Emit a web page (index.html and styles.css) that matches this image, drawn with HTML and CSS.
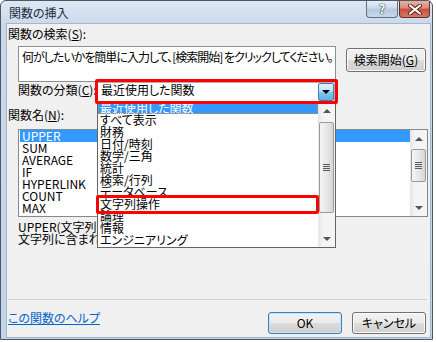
FILE: index.html
```html
<!DOCTYPE html>
<html lang="ja">
<head>
    <meta charset="UTF-8">
    <meta name="viewport" content="width=device-width, initial-scale=1.0">
    <title>関数の挿入</title>
    <link rel="stylesheet" href="styles.css">
</head>
<body>
    <div class="window">
        <div class="titlebar">
            <span class="title">関数の挿入</span>
            <div class="caption-btns">
                <span class="cap help">?</span>
                <span class="cap close">
                    <svg width="14" height="11" viewBox="0 0 14 11">
                        <path d="M2 1.5 L12 9.5 M12 1.5 L2 9.5" stroke="#5a1f18" stroke-width="4" stroke-linecap="round"/>
                        <path d="M2 1.5 L12 9.5 M12 1.5 L2 9.5" stroke="#fff" stroke-width="2.2" stroke-linecap="round"/>
                    </svg>
                </span>
            </div>
        </div>

        <div class="client">
            <div class="label label-top">関数の検索(<u>S</u>):</div>

            <div class="search-row">
                <div class="search-box">何がしたいかを簡単に入力して、[検索開始] をクリックしてください。</div>
                <button class="btn btn-search">検索開始(<u>G</u>)</button>
            </div>

            <div class="cat-row">
                <span class="cat-label">関数の分類(<u>C</u>):</span>
                <div class="combo">
                    <span class="combo-text">最近使用した関数</span>
                    <span class="combo-arrow"><i class="tri-down"></i></span>
                </div>
            </div>

            <div class="label label-fn">関数名(<u>N</u>):</div>

            <div class="fn-list">
                <div class="fn-items">
                    <div class="row selected">UPPER</div>
                    <div class="row">SUM</div>
                    <div class="row">AVERAGE</div>
                    <div class="row">IF</div>
                    <div class="row">HYPERLINK</div>
                    <div class="row">COUNT</div>
                    <div class="row">MAX</div>
                </div>
                <div class="sb">
                    <div class="sb-btn"><i class="tri-up"></i></div>
                    <div class="sb-track">
                        <div class="sb-thumb fn-thumb"><i class="grip"></i></div>
                    </div>
                    <div class="sb-btn"><i class="tri-down small"></i></div>
                </div>
            </div>

            <div class="desc">
                <div>UPPER(文字列)</div>
                <div>文字列に含まれる英字をすべて大文字に変換します。</div>
            </div>

            <div class="sep"></div>

            <div class="footer">
                <a class="help-link" href="#">この関数のヘルプ</a>
                <button class="btn btn-ok">OK</button>
                <button class="btn btn-cancel">キャンセル</button>
            </div>

            <!-- 開いた分類リスト -->
            <div class="dropdown">
                <div class="dd-items">
                    <div class="row selected focus">最近使用した関数</div>
                    <div class="row">すべて表示</div>
                    <div class="row">財務</div>
                    <div class="row">日付/時刻</div>
                    <div class="row">数学/三角</div>
                    <div class="row">統計</div>
                    <div class="row">検索/行列</div>
                    <div class="row">データベース</div>
                    <div class="row">文字列操作</div>
                    <div class="row">論理</div>
                    <div class="row">情報</div>
                    <div class="row">エンジニアリング</div>
                </div>
                <div class="sb">
                    <div class="sb-btn"><i class="tri-up"></i></div>
                    <div class="sb-track">
                        <div class="sb-thumb dd-thumb"><i class="grip"></i></div>
                    </div>
                    <div class="sb-btn"><i class="tri-down small"></i></div>
                </div>
            </div>

            <!-- 赤枠 -->
            <div class="mark mark-combo"></div>
            <div class="mark mark-item"></div>
        </div>
    </div>
</body>
</html>
```

FILE: styles.css
```css
* {
    margin: 0;
    padding: 0;
    box-sizing: border-box;
}

body {
    font-family: "Noto Sans CJK JP", "Noto Sans", sans-serif;
    font-size: 12px;
    line-height: 14px;
    font-feature-settings: "palt";
    color: #000;
    background: #fff;
}

u {
    text-decoration: underline;
    text-underline-offset: 1px;
}

.window {
    width: 433px;
    height: 340px;
    border: 1px solid #4a5868;
    border-radius: 6px 6px 0 0;
    padding: 0 2px 2px 6px;
    background: linear-gradient(#dce8f5, #c9d9eb 24px, #c3d4e8);
    display: flex;
    flex-direction: column;
}

/* タイトルバー */
.titlebar {
    height: 23px;
    display: flex;
    justify-content: space-between;
    align-items: flex-start;
    margin-left: -5px;
}

.title {
    padding: 5px 0 0 7px;
    color: #1e2b3a;
}

.caption-btns {
    display: flex;
    gap: 1px;
}

.cap {
    height: 17px;
    display: flex;
    align-items: center;
    justify-content: center;
    border: 1px solid #5f7189;
    border-top: none;
    border-radius: 0 0 4px 4px;
}

.help {
    width: 32px;
    background: linear-gradient(#e6eef7, #cbd9ea 45%, #b5c8de 50%, #c8d8ea);
    color: #fff;
    font-weight: bold;
    font-size: 13px;
    text-shadow: 0 0 1px #273648, 0 0 1px #273648, 0 0 1px #273648;
}

.close {
    width: 31px;
    border-color: #6b2a22;
    background: linear-gradient(#eab0a2, #d98a79 45%, #c5503c 50%, #d57a65);
}

/* クライアント領域 */
.client {
    position: relative;
    width: 423px;
    height: 313px;
    background: #f0f0f0;
    box-shadow: 0 0 0 1px #a5b6ca;
    display: flex;
    flex-direction: column;
    padding-bottom: 3px;
}

.label {
    margin-left: 1px;
}

.label-top {
    margin-top: 3px;
}

.search-row {
    display: flex;
    align-items: flex-start;
    margin-top: 5px;
    margin-left: 11px;
}

.search-box {
    width: 318px;
    height: 36px;
    background: #fff;
    border: 1px solid #8a8f98;
    padding: 3px 3px;
    white-space: nowrap;
    overflow: hidden;
    letter-spacing: -1px;
}

.btn {
    font: inherit;
    font-feature-settings: "palt";
    color: #000;
    border: 1px solid #707070;
    border-radius: 3px;
    background: linear-gradient(#f2f2f2, #ebebeb 50%, #dddddd 50%, #cfcfcf);
    box-shadow: inset 0 0 0 1px #fbfbfb;
    display: flex;
    align-items: center;
    justify-content: center;
}

.btn-search {
    width: 80px;
    height: 24px;
    margin: 2px 0 0 10px;
}

.cat-row {
    display: flex;
    align-items: flex-start;
    margin-left: 11px;
}

.cat-label {
    width: 79px;
    margin-top: 1px;
}

.combo {
    width: 238px;
    height: 20px;
    background: #fff;
    border: 1px solid #abadb3;
    display: flex;
    justify-content: space-between;
}

.combo-text {
    padding-left: 3px;
}

.combo-arrow {
    width: 16px;
    height: 18px;
    border: 1px solid #3c7fb1;
    border-radius: 2px;
    background: linear-gradient(#e3f3fd, #bfe2f7 45%, #86c6ee 50%, #5fb0e6);
    display: flex;
    align-items: center;
    justify-content: center;
}

.tri-down {
    width: 0;
    height: 0;
    border-left: 4px solid transparent;
    border-right: 4px solid transparent;
    border-top: 4px solid #000;
}

.tri-up {
    width: 0;
    height: 0;
    border-left: 4px solid transparent;
    border-right: 4px solid transparent;
    border-bottom: 4px solid #555;
}

.tri-down.small {
    border-top-color: #555;
}

.label-fn {
    margin-top: 6px;
}

/* 関数名リスト */
.fn-list {
    width: 410px;
    height: 88px;
    margin: 7px 0 0 11px;
    border: 1px solid #828790;
    background: #fff;
    display: flex;
}

.fn-items {
    flex: 1;
    line-height: 12px;
}

.row {
    height: 12px;
    padding-left: 2px;
    white-space: nowrap;
}

.fn-items .row {
    padding-left: 3px;
}

.fn-items .selected {
    margin-left: 1px;
    padding-left: 2px;
}

.selected {
    background: #3399ff;
    color: #fff;
}

.focus {
    outline: 1px dotted #d48a3c;
    outline-offset: -1px;
}

/* スクロールバー */
.sb {
    width: 17px;
    display: flex;
    flex-direction: column;
    background: linear-gradient(to right, #e6e6e6, #f4f4f4 30%, #f4f4f4);
}

.sb-btn {
    height: 17px;
    display: flex;
    align-items: center;
    justify-content: center;
}

.sb-track {
    flex: 1;
}

.sb-thumb {
    margin: 0 1px;
    border: 1px solid #9a9a9a;
    border-radius: 2px;
    background: linear-gradient(to right, #f4f4f4, #e8e8e8 50%, #d6d6d6);
    display: flex;
    align-items: center;
    justify-content: center;
}

.fn-thumb {
    margin-top: 2px;
    height: 33px;
}

.dd-thumb {
    margin-top: 3px;
    height: 91px;
}

.grip {
    width: 7px;
    height: 7px;
    background: repeating-linear-gradient(#5a5a5a 0 1px, #e6e6e6 1px 2px);
}

.desc {
    margin: 4px 0 0 11px;
    line-height: 12px;
    white-space: nowrap;
}

.sep {
    margin: auto 3px 0 1px;
    border-top: 1px solid #cdd5de;
}

.footer {
    display: flex;
    align-items: flex-start;
    margin-top: 12px;
    margin-left: 1px;
}

.help-link {
    color: #0066cc;
    margin-top: -1px;
    text-decoration: underline;
    text-underline-offset: 1px;
}

.btn-ok,
.btn-cancel {
    width: 74px;
    height: 22px;
}

.btn-ok {
    margin-left: auto;
    border-color: #3c7fb1;
    box-shadow: inset 0 0 0 1px #bfe6fa;
}

.btn-cancel {
    margin: 0 4px 0 10px;
}

/* 開いたドロップダウン */
.dropdown {
    position: absolute;
    left: 90px;
    top: 77px;
    width: 239px;
    height: 147px;
    border: 1px solid #646464;
    background: #fff;
    display: flex;
}

.dd-items {
    flex: 1;
    line-height: 12px;
}

.mark {
    position: absolute;
    border: 3px solid #ff0000;
    border-radius: 2px;
}

.mark-combo {
    left: 88px;
    top: 55px;
    width: 243px;
    height: 25px;
}

.mark-item {
    left: 89px;
    top: 171px;
    width: 223px;
    height: 19px;
}
```
